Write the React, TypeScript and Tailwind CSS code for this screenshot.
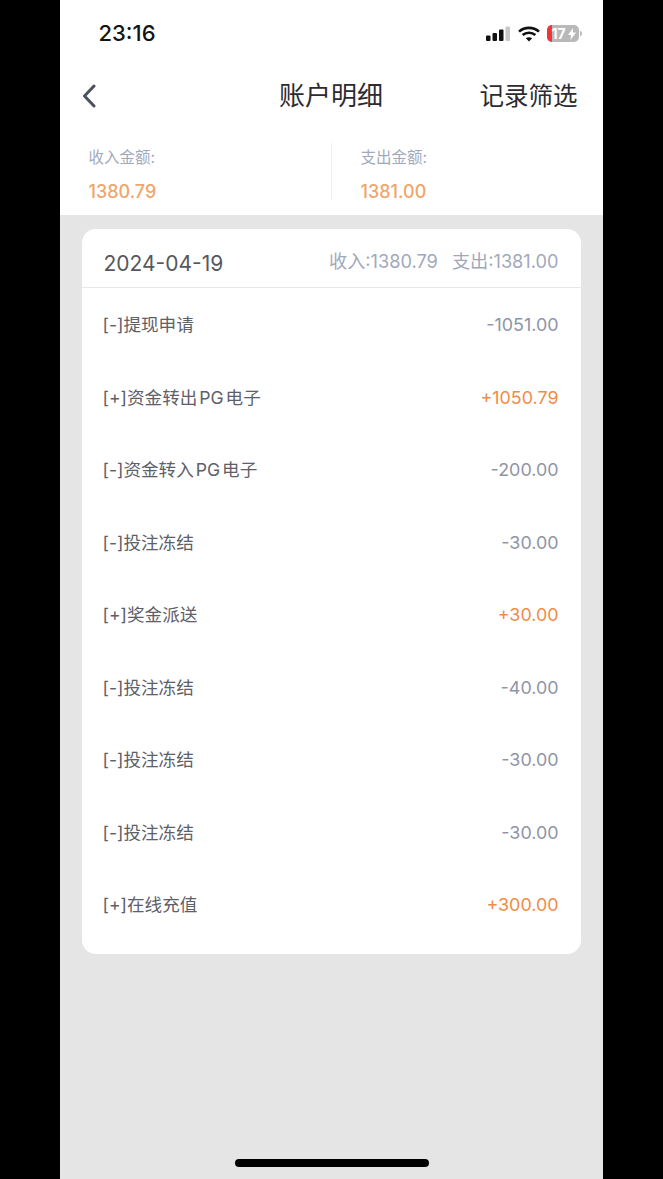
const font = "font-['Inter','Noto_Sans_CJK_SC',sans-serif]";

type Row = { label: string; amount: string; income: boolean };

const rows: Row[] = [
  { label: "[-]提现申请", amount: "-1051.00", income: false },
  { label: "[+]资金转出 PG 电子", amount: "+1050.79", income: true },
  { label: "[-]资金转入 PG 电子", amount: "-200.00", income: false },
  { label: "[-]投注冻结", amount: "-30.00", income: false },
  { label: "[+]奖金派送", amount: "+30.00", income: true },
  { label: "[-]投注冻结", amount: "-40.00", income: false },
  { label: "[-]投注冻结", amount: "-30.00", income: false },
  { label: "[-]投注冻结", amount: "-30.00", income: false },
  { label: "[+]在线充值", amount: "+300.00", income: true },
];

function StatusIcons() {
  return (
    <div className="flex items-center">
      <svg width="25" height="16" viewBox="0 0 25 16">
        <rect x="0" y="9.500" width="4.500" height="5.500" rx="1" fill="#111" />
        <rect x="6.500" y="7" width="4.500" height="8" rx="1" fill="#111" />
        <rect x="13" y="3.500" width="4.500" height="11.500" rx="1" fill="#111" />
        <rect x="19.500" y="0.500" width="4.500" height="14.500" rx="1" fill="#c8c8c8" />
      </svg>
      <svg width="22" height="16" viewBox="0 0 22 16" className="ml-[7px]">
        <path d="M1 5.600C6.600.6 15.400.6 21 5.600" fill="none" stroke="#111" strokeWidth="2.600" />
        <path d="M4.600 9.100c3.600-3.100 9.200-3.100 12.800 0" fill="none" stroke="#111" strokeWidth="2.600" />
        <path d="M7.800 12.200 11 15.400l3.200-3.200c-1.800-1.400-4.600-1.400-6.400 0z" fill="#111" />
      </svg>
      <div className="ml-[7px] flex items-center">
        <div className="relative flex h-[17px] w-[32px] items-center overflow-hidden rounded-[5px] bg-[#b9b9b9]">
          <div className="h-full w-[5px] bg-[#f0353a]" />
          <span className="absolute left-[5px] top-0 text-[14px] leading-[17px] font-bold text-white">17</span>
          <svg width="8" height="12" viewBox="0 0 8 12" className="absolute right-[3px] top-[3px]">
            <path d="M5 0 0 7h3L2.500 12 8 4.500H4.800z" fill="#fff" />
          </svg>
        </div>
        <div className="ml-[1px] h-[5px] w-[2px] rounded-r-sm bg-[#bdbdbd]" />
      </div>
    </div>
  );
}

export default function App() {
  return (
    <div className={`flex h-[1179px] w-[663px] justify-center bg-black ${font}`}>
      <div className="mr-[1px] flex w-[543px] flex-col bg-[#e5e5e5]">
        <header className="bg-white">
          <div className="flex h-[66px] items-start justify-between pl-[39px] pr-[21px] pt-[20px]">
            <span className="text-[22px] leading-[27px] font-medium text-[#141414]">23:16</span>
            <div className="pt-[5px]">
              <StatusIcons />
            </div>
          </div>
          <div className="relative flex h-[60px] items-center justify-between pl-[22px] pr-[25px]">
            <svg width="14" height="24" viewBox="0 0 14 24" fill="none">
              <path d="M12 2 2.500 12 12 22" stroke="#4a5060" strokeWidth="3" strokeLinecap="round" strokeLinejoin="round" />
            </svg>
            <span className="absolute inset-x-0 text-center text-[26px] leading-[34px] text-[#2c2c30]">账户明细</span>
            <span className="relative text-[24.500px] leading-[34px] text-[#2c2c30]">记录筛选</span>
          </div>
          <div className="flex h-[89px] pt-[22px]">
            <div className="flex w-[271px] flex-col gap-[14px] pl-[29px]">
              <span className="text-[15.500px] leading-[20px] text-[#a2a8bc]">收入金额:</span>
              <span className="text-[18px] leading-[20px] font-medium text-[#f0a669]">1380.79</span>
            </div>
            <div className="-mt-[5px] mb-[15px] w-px bg-[#f0f0f2]" />
            <div className="flex flex-1 flex-col gap-[14px] pl-[29px]">
              <span className="text-[15.500px] leading-[20px] text-[#a2a8bc]">支出金额:</span>
              <span className="text-[18px] leading-[20px] font-medium text-[#f0a669]">1381.00</span>
            </div>
          </div>
        </header>

        <main className="flex flex-1 flex-col px-[22px] pt-[14px]">
          <section className="overflow-hidden rounded-[14px] bg-white">
            <div className="flex h-[59px] items-center justify-between border-b-[1.500px] border-[#e8e8ec] px-[22px] pt-[12px]">
              <span className="text-[21px] leading-[28px] text-[#56585f]">2024-04-19</span>
              <div className="flex gap-[14px] pb-[6px] text-[18.200px] leading-[24px] text-[#a2a8bc]">
                <span>收入:1380.79</span>
                <span>支出:1381.00</span>
              </div>
            </div>
            <ul className="pt-px pb-[12px]">
              {rows.map((row, i) => (
                <li key={i} className="flex h-[72.500px] items-center justify-between pl-[21px] pr-[22px]">
                  <span className="text-[17.600px] leading-[24px] [word-spacing:-3px] text-[#5e6068]">{row.label}</span>
                  <span className={`text-[17.900px] leading-[24px] ${row.income ? "text-[#ef8c48]" : "text-[#9094a6]"}`}>
                    {row.amount}
                  </span>
                </li>
              ))}
            </ul>
          </section>
          <div className="mt-auto mb-[12px] flex justify-center pl-[1px]">
            <div className="h-[8px] w-[194px] rounded-full bg-black" />
          </div>
        </main>
      </div>
    </div>
  );
}
